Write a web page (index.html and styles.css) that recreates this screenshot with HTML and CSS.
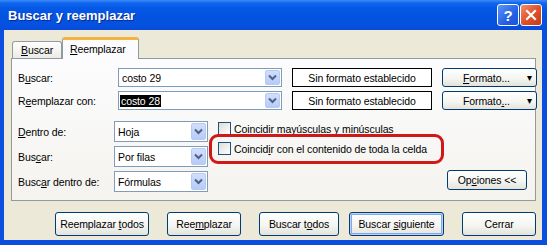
FILE: index.html
```html
<!DOCTYPE html>
<html lang="es">
<head>
<meta charset="utf-8">
<title>Buscar y reemplazar</title>
<link rel="stylesheet" href="styles.css">
</head>
<body>
<div class="window">
  <div class="titlebar">
    <span class="title">Buscar y reemplazar</span>
    <div class="caption-btns">
      <span class="cap-btn help">?</span>
      <span class="cap-btn close">
        <svg width="14" height="14" viewBox="0 0 14 14"><path d="M3 3 L11 11 M11 3 L3 11" stroke="#fff" stroke-width="2.2" stroke-linecap="square"/></svg>
      </span>
    </div>
  </div>
  <div class="client">
    <div class="tabs">
      <span class="tab"><u>B</u>uscar</span>
      <span class="tab active"><u>R</u>eemplazar</span>
    </div>
    <div class="panel">
      <div class="top-grid">
        <span class="label">B<u>u</u>scar:</span>
        <div class="combo wide"><span class="value">costo 29</span><span class="drop"><svg width="9" height="7" viewBox="0 0 9 7"><path d="M1 1.5 L4.5 5 L8 1.5" fill="none" stroke="#4D6185" stroke-width="2"/></svg></span></div>
        <div class="fmtbox">Sin formato establecido</div>
        <div class="btn fmt"><span><u>F</u>ormato...</span><span class="arrow">▾</span></div>

        <span class="label">R<u>e</u>emplazar con:</span>
        <div class="combo wide"><span class="value"><span class="sel">costo 28</span></span><span class="drop"><svg width="9" height="7" viewBox="0 0 9 7"><path d="M1 1.5 L4.5 5 L8 1.5" fill="none" stroke="#4D6185" stroke-width="2"/></svg></span></div>
        <div class="fmtbox">Sin formato establecido</div>
        <div class="btn fmt"><span>Formato<u>.</u>..</span><span class="arrow">▾</span></div>
      </div>
      <div class="low-grid">
        <span class="label r1"><u>D</u>entro de:</span>
        <div class="combo r1"><span class="value">Hoja</span><span class="drop"><svg width="9" height="7" viewBox="0 0 9 7"><path d="M1 1.5 L4.5 5 L8 1.5" fill="none" stroke="#4D6185" stroke-width="2"/></svg></span></div>
        <div class="checks">
          <label class="check"><span class="box"></span><span>Coincidir <u>m</u>ayúsculas y minúsculas</span></label>
          <label class="check"><span class="box"></span><span>Coincid<u>i</u>r con el contenido de toda la celda</span></label>
        </div>

        <span class="label r2">Bus<u>c</u>ar:</span>
        <div class="combo r2"><span class="value">Por filas</span><span class="drop"><svg width="9" height="7" viewBox="0 0 9 7"><path d="M1 1.5 L4.5 5 L8 1.5" fill="none" stroke="#4D6185" stroke-width="2"/></svg></span></div>

        <span class="label r3">Busc<u>a</u>r dentro de:</span>
        <div class="combo r3"><span class="value">Fórmulas</span><span class="drop"><svg width="9" height="7" viewBox="0 0 9 7"><path d="M1 1.5 L4.5 5 L8 1.5" fill="none" stroke="#4D6185" stroke-width="2"/></svg></span></div>
        <div class="btn opts"><span>Op<u>c</u>iones &lt;&lt;</span></div>
      </div>
      <div class="highlight"></div>
    </div>
    <div class="actions">
      <div class="btn w94"><span>Reemplazar <u>t</u>odos</span></div>
      <div class="btn w74"><span>Ree<u>m</u>plazar</span></div>
      <div class="pair">
        <div class="btn w80"><span>Buscar t<u>o</u>dos</span></div>
        <div class="btn w95 default"><span>Buscar <u>s</u>iguiente</span></div>
      </div>
      <div class="btn w74"><span>Cerrar</span></div>
    </div>
  </div>
</div>
</body>
</html>
```
FILE: styles.css
```css
* { box-sizing: border-box; }
html, body { margin: 0; padding: 0; }
body {
  width: 547px;
  height: 245px;
  overflow: hidden;
  font-family: "Liberation Sans", Arial, sans-serif;
  font-size: 10.5px;
  letter-spacing: -0.1px;
  color: #000;
}
u { text-decoration: underline; text-underline-offset: 1px; }

.window {
  width: 547px;
  height: 245px;
  display: flex;
  flex-direction: column;
  background: #0A4FE0;
}

.titlebar {
  height: 30px;
  flex: none;
  display: flex;
  align-items: center;
  padding-left: 8px;
  padding-right: 5px;
  background: linear-gradient(#3D8BF8 0px, #1066EE 3px, #0558E6 8px, #0453E0 18px, #0550E0 26px, #0A4AD8 30px);
}
.title {
  color: #fff;
  font-weight: bold;
  font-size: 13px;
  letter-spacing: 0;
  text-shadow: 1px 1px 0 #0A2B8C;
  flex: 1;
  padding-top: 1px;
}
.caption-btns { display: flex; gap: 1px; }
.cap-btn {
  width: 22px;
  height: 22px;
  border: 1px solid #fff;
  border-radius: 3px;
  display: flex;
  align-items: center;
  justify-content: center;
  color: #fff;
  font-weight: bold;
  font-size: 15px;
}
.help { background: linear-gradient(135deg, #5B95F8, #2561E4 60%, #1A52D6); }
.close { background: linear-gradient(135deg, #F09272, #E0512B 50%, #C73A16); }

.client {
  flex: 1;
  margin: 0 5px 5px 4px;
  background: #ECE9D8;
  display: flex;
  flex-direction: column;
  padding: 7px 6px 0 7px;
}

.tabs {
  display: flex;
  align-items: flex-end;
  height: 21px;
  padding-left: 1px;
  position: relative;
  z-index: 1;
}
.tab {
  height: 17px;
  width: 50px;
  padding: 2px 0 0 8px;
  border: 1px solid #919B9C;
  border-bottom: none;
  border-radius: 3px 3px 0 0;
  background: linear-gradient(#FEFEFE, #ECEBE6);
}
.tab.active {
  height: 22px;
  width: 77px;
  margin-bottom: -1px;
  padding: 3px 0 0 7px;
  border-top: 3px solid #F5B33D;
  background: #FCFCFE;
}

.panel {
  position: relative;
  height: 143px;
  border: 1px solid #919B9C;
  background: linear-gradient(#FCFCFE, #F4F3EE);
  padding: 9px 8px 0 6px;
}

.top-grid {
  display: grid;
  grid-template-columns: 90px 164px 140px 95px;
  grid-auto-rows: 19px;
  column-gap: 10px;
  row-gap: 4px;
  align-items: center;
}
.label { white-space: nowrap; grid-column: 1; }

.combo {
  height: 100%;
  border: 1px solid #7F9DB9;
  background: #fff;
  display: flex;
  align-items: center;
  padding: 1px;
}
.combo .value { flex: 1; padding-left: 2px; white-space: nowrap; }
.sel { background: #000; color: #fff; margin-left: -2px; padding: 0 1px; }
.drop {
  width: 15px;
  height: 100%;
  border-radius: 2px;
  background: linear-gradient(#D2DEFC, #B7CBF8);
  border: 1px solid #B8C9F3;
  display: flex;
  align-items: center;
  justify-content: center;
}

.fmtbox {
  height: 100%;
  border: 1px solid #000;
  display: flex;
  align-items: center;
  justify-content: center;
  background: #fff;
}

.btn {
  height: 100%;
  border: 1px solid #003C74;
  border-radius: 3px;
  background: linear-gradient(#FFFFFF, #F4F4F0 60%, #E3E2DA);
  display: flex;
  align-items: center;
  justify-content: center;
  white-space: nowrap;
}
.btn.fmt { justify-content: flex-start; padding-left: 20px; }
.btn.fmt .arrow { margin-left: auto; margin-right: 4px; font-size: 10px; }

.low-grid {
  margin-top: 11px;
  display: grid;
  grid-template-columns: 96px 94px 1fr 80px;
  grid-template-rows: 21px 21px 21px;
  row-gap: 4px;
  align-items: center;
}
.low-grid .combo { grid-column: 2; }
.r1 { grid-row: 1; }
.r2 { grid-row: 2; }
.r3 { grid-row: 3; }
.checks {
  grid-column: 3;
  grid-row: 1 / 3;
  align-self: start;
  padding: 1px 0 0 10px;
  display: flex;
  flex-direction: column;
  gap: 7px;
}
.check { display: flex; align-items: center; gap: 3px; height: 13px; }
.box {
  width: 13px;
  height: 13px;
  border: 1px solid #1C5180;
  background: linear-gradient(135deg, #DCDCD7, #FFFFFF);
}
.btn.opts { grid-column: 4; grid-row: 3; height: 20px; align-self: start; margin-top: -1px; }

.highlight {
  position: absolute;
  left: 197px;
  top: 75px;
  width: 235px;
  height: 30px;
  border: 3px solid #D01818;
  border-radius: 9px;
}

.actions {
  margin-top: 11px;
  height: 24px;
  display: flex;
  justify-content: flex-end;
  gap: 18px;
}
.pair { display: flex; gap: 10px; }
.w94 { width: 94px; }
.w74 { width: 74px; }
.w80 { width: 80px; }
.w95 { width: 95px; }
.btn.default { box-shadow: inset 0 0 0 1px #B9D1F5, inset 0 0 0 2px #86A8E8; }
```
